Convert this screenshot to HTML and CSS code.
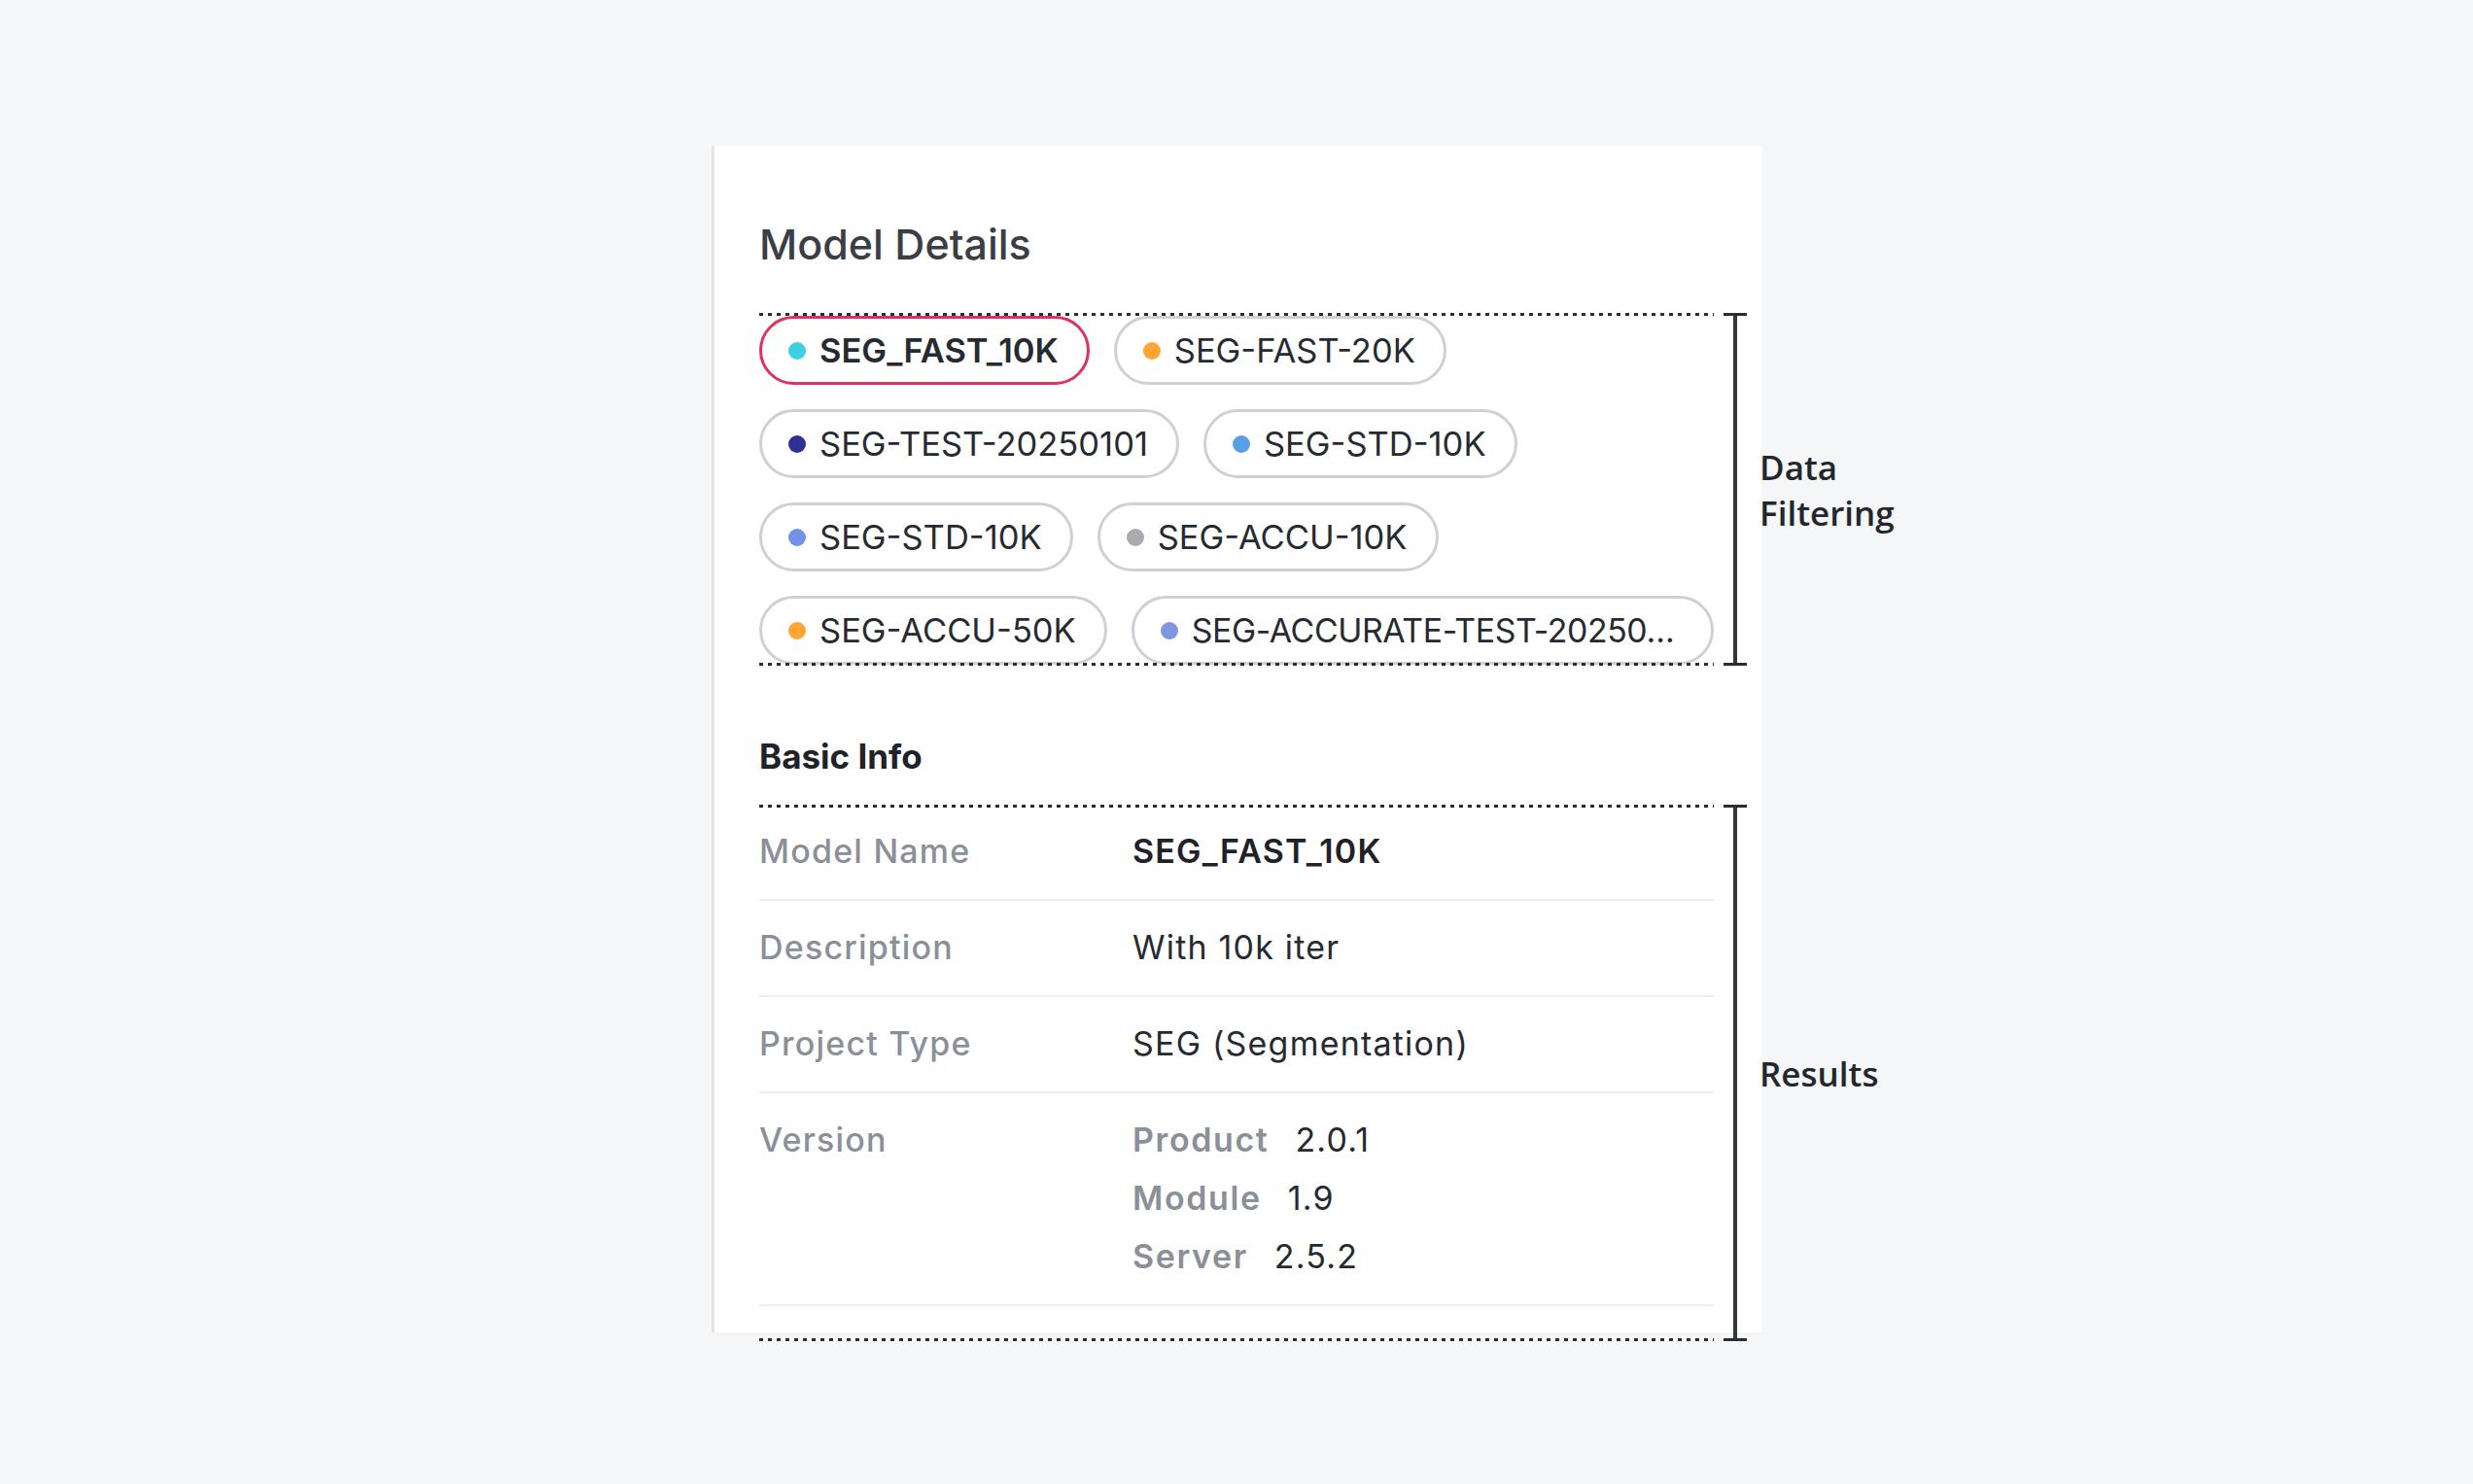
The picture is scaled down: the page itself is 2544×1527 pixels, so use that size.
FILE: index.html
```html
<!DOCTYPE html>
<html lang="en">
<head>
	<meta charset="UTF-8">
	<title>Model Details</title>
	<link rel="stylesheet" href="styles.css">
</head>
<body>
	<div class="panel">
		<h1 class="title">Model Details</h1>

		<div class="zone zone-filter">
			<div class="chips">
				<span class="chip active"><i class="dot cyan"></i><span class="chip-text">SEG_FAST_10K</span></span>
				<span class="chip"><i class="dot orange"></i><span class="chip-text">SEG-FAST-20K</span></span>
				<span class="chip"><i class="dot navy"></i><span class="chip-text">SEG-TEST-20250101</span></span>
				<span class="chip"><i class="dot blue"></i><span class="chip-text">SEG-STD-10K</span></span>
				<span class="chip"><i class="dot periwinkle"></i><span class="chip-text">SEG-STD-10K</span></span>
				<span class="chip"><i class="dot gray"></i><span class="chip-text">SEG-ACCU-10K</span></span>
				<span class="chip"><i class="dot orange"></i><span class="chip-text">SEG-ACCU-50K</span></span>
				<span class="chip fill"><i class="dot lavender"></i><span class="chip-text">SEG-ACCURATE-TEST-20250…</span></span>
			</div>
			<div class="annot">
				<span class="bracket"></span>
				<span class="annot-label">Data Filtering</span>
			</div>
		</div>

		<h2 class="subtitle">Basic Info</h2>

		<div class="zone zone-results">
			<div class="info-row">
				<div class="info-key">Model Name</div>
				<div class="info-val strong">SEG_FAST_10K</div>
			</div>
			<div class="info-row">
				<div class="info-key">Description</div>
				<div class="info-val">With 10k iter</div>
			</div>
			<div class="info-row">
				<div class="info-key">Project Type</div>
				<div class="info-val">SEG (Segmentation)</div>
			</div>
			<div class="info-row">
				<div class="info-key">Version</div>
				<div class="info-val versions">
					<div class="ver"><span class="ver-key">Product</span><span>2.0.1</span></div>
					<div class="ver"><span class="ver-key">Module</span><span>1.9</span></div>
					<div class="ver"><span class="ver-key">Server</span><span>2.5.2</span></div>
				</div>
			</div>
			<div class="annot">
				<span class="bracket"></span>
				<span class="annot-label">Results</span>
			</div>
		</div>
	</div>
</body>
</html>
```

FILE: styles.css
```css
html{
	height: 100%;
	background: #f5f6f8;
}
body{
	margin: 0;
	padding: 150px 0 120px;
	font-family: Inter, "Noto Sans", sans-serif;
	color: #262a31;
}
.panel{
	display: flow-root;
	box-sizing: border-box;
	width: 1080px;
	margin: 0 auto;
	padding: 73px 49px 0 46px;
	background: #fff;
	border-left: 3px solid #e3e5e8;
}
.title{
	margin: 0;
	font-size: 43px;
	line-height: 56px;
	font-weight: 500;
	color: #3b3e46;
}

/* dotted guides + bracket annotations */
.zone{
	position: relative;
}
.zone::before,
.zone::after{
	content: '';
	position: absolute;
	left: 0;
	right: 0;
	height: 3px;
	background: repeating-linear-gradient(to right, #2a2d35 0 4px, transparent 4px 9px);
}
.zone::before{
	top: -2px;
}
.zone::after{
	bottom: -1px;
}
.annot{
	position: absolute;
	top: -2px;
	bottom: -1px;
	left: calc(100% + 10px);
	display: flex;
	align-items: center;
}
.bracket{
	align-self: stretch;
	width: 24px;
	border-top: 3px solid #2a2d35;
	border-bottom: 3px solid #2a2d35;
	background: linear-gradient(to right, transparent 10px, #33363e 10px, #33363e 14px, transparent 14px);
}
.annot-label{
	margin-left: 13px;
	width: 170px;
	font-family: "Open Sans", "Noto Sans", sans-serif;
	font-size: 35px;
	line-height: 47px;
	font-weight: 600;
	color: #23262d;
}

/* chips */
.zone-filter{
	margin-top: 45px;
}
.chips{
	display: flex;
	flex-wrap: wrap;
	gap: 25px;
	padding-top: 1px;
}
.chip{
	box-sizing: border-box;
	display: inline-flex;
	align-items: center;
	height: 71px;
	padding: 0 29px 0 27px;
	border: 3px solid #cdd0d4;
	border-radius: 36px;
	font-size: 34.5px;
	white-space: nowrap;
}
.chip.active{
	border-color: #e0325a;
	font-weight: 600;
}
.chip.fill{
	flex: 1;
	min-width: 0;
	overflow: hidden;
	font-size: 33.8px;
	letter-spacing: -0.4px;
}
.chip-text{
	min-width: 0;
	overflow: hidden;
	text-overflow: ellipsis;
}
.dot{
	flex: none;
	width: 18px;
	height: 18px;
	margin-right: 14px;
	border-radius: 50%;
}
.dot.cyan{ background: #3ecfe0; }
.dot.orange{ background: #ffa533; }
.dot.navy{ background: #2e3192; }
.dot.blue{ background: #5b9ee8; }
.dot.periwinkle{ background: #7491e8; }
.dot.gray{ background: #a9abae; }
.dot.lavender{ background: #7f96e0; }

/* basic info */
.subtitle{
	margin: 71px 0 0;
	font-size: 35px;
	line-height: 46px;
	font-weight: 700;
	color: #1f2228;
}
.zone-results{
	margin-top: 29px;
	margin-bottom: -8px;
	padding-bottom: 35px;
}
.info-row{
	display: grid;
	grid-template-columns: 384px 1fr;
	padding: 26px 0 29px;
	border-bottom: 2px solid #eceef1;
	font-size: 34px;
	line-height: 40px;
	letter-spacing: 1.2px;
}
.info-row + .info-row{
	padding-top: 28px;
}
.info-key{
	color: #8b8f97;
	font-weight: 500;
}
.info-val{
	color: #262a31;
}
.info-val.strong{
	font-weight: 600;
	color: #1f2228;
}
.versions{
	display: flex;
	flex-direction: column;
	gap: 20px;
}
.ver{
	display: flex;
	gap: 27px;
}
.ver-key{
	color: #8b8f97;
	font-weight: 600;
	letter-spacing: 1.6px;
}
```
